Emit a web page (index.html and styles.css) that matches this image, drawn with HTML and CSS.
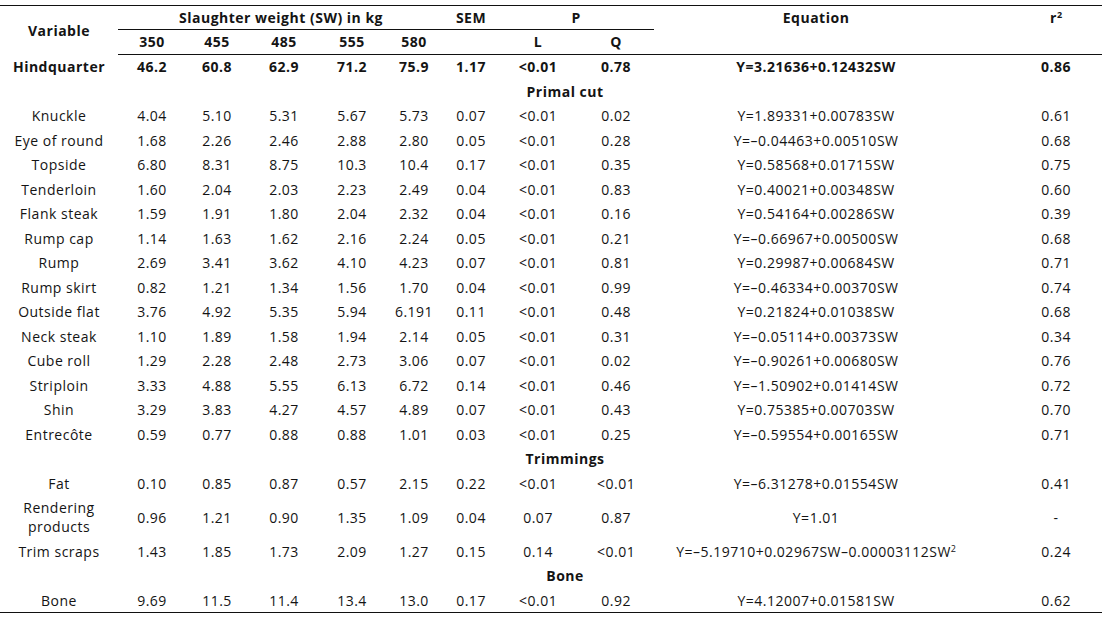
FILE: index.html
```html
<!DOCTYPE html>
<html lang="en">
<head>
<meta charset="utf-8">
<title>Hindquarter primal cuts by slaughter weight</title>
<link rel="stylesheet" href="styles.css">
</head>
<body>
<table class="data">
  <colgroup>
    <col class="c-var"><col class="c-350"><col class="c-455"><col class="c-485"><col class="c-555"><col class="c-580">
    <col class="c-sem"><col class="c-l"><col class="c-q"><col class="c-eq"><col class="c-r2">
  </colgroup>
  <thead>
    <tr class="h1">
      <th rowspan="2" class="var-head">Variable</th>
      <th colspan="5" class="rule">Slaughter weight (SW) in kg</th>
      <th class="rule">SEM</th>
      <th colspan="2" class="rule">P</th>
      <th>Equation</th>
      <th class="r2">r<sup class="sup">2</sup></th>
    </tr>
    <tr class="h2">
      <th class="rule">350</th>
      <th class="rule">455</th>
      <th class="rule">485</th>
      <th class="rule">555</th>
      <th class="rule">580</th>
      <th class="rule"></th>
      <th class="rule">L</th>
      <th class="rule">Q</th>
      <th class="rule"></th>
      <th class="rule r2"></th>
    </tr>
  </thead>
  <tbody>
    <tr class="bold"><td>Hindquarter</td><td>46.2</td><td>60.8</td><td>62.9</td><td>71.2</td><td>75.9</td><td>1.17</td><td>&lt;0.01</td><td>0.78</td><td>Y=3.21636+0.12432SW</td><td class="r2">0.86</td></tr>
    <tr class="section"><td colspan="11">Primal cut</td></tr>
    <tr><td>Knuckle</td><td>4.04</td><td>5.10</td><td>5.31</td><td>5.67</td><td>5.73</td><td>0.07</td><td>&lt;0.01</td><td>0.02</td><td>Y=1.89331+0.00783SW</td><td class="r2">0.61</td></tr>
    <tr><td>Eye of round</td><td>1.68</td><td>2.26</td><td>2.46</td><td>2.88</td><td>2.80</td><td>0.05</td><td>&lt;0.01</td><td>0.28</td><td>Y=–0.04463+0.00510SW</td><td class="r2">0.68</td></tr>
    <tr><td>Topside</td><td>6.80</td><td>8.31</td><td>8.75</td><td>10.3</td><td>10.4</td><td>0.17</td><td>&lt;0.01</td><td>0.35</td><td>Y=0.58568+0.01715SW</td><td class="r2">0.75</td></tr>
    <tr><td>Tenderloin</td><td>1.60</td><td>2.04</td><td>2.03</td><td>2.23</td><td>2.49</td><td>0.04</td><td>&lt;0.01</td><td>0.83</td><td>Y=0.40021+0.00348SW</td><td class="r2">0.60</td></tr>
    <tr><td>Flank steak</td><td>1.59</td><td>1.91</td><td>1.80</td><td>2.04</td><td>2.32</td><td>0.04</td><td>&lt;0.01</td><td>0.16</td><td>Y=0.54164+0.00286SW</td><td class="r2">0.39</td></tr>
    <tr><td>Rump cap</td><td>1.14</td><td>1.63</td><td>1.62</td><td>2.16</td><td>2.24</td><td>0.05</td><td>&lt;0.01</td><td>0.21</td><td>Y=–0.66967+0.00500SW</td><td class="r2">0.68</td></tr>
    <tr><td>Rump</td><td>2.69</td><td>3.41</td><td>3.62</td><td>4.10</td><td>4.23</td><td>0.07</td><td>&lt;0.01</td><td>0.81</td><td>Y=0.29987+0.00684SW</td><td class="r2">0.71</td></tr>
    <tr><td>Rump skirt</td><td>0.82</td><td>1.21</td><td>1.34</td><td>1.56</td><td>1.70</td><td>0.04</td><td>&lt;0.01</td><td>0.99</td><td>Y=–0.46334+0.00370SW</td><td class="r2">0.74</td></tr>
    <tr><td>Outside flat</td><td>3.76</td><td>4.92</td><td>5.35</td><td>5.94</td><td>6.191</td><td>0.11</td><td>&lt;0.01</td><td>0.48</td><td>Y=0.21824+0.01038SW</td><td class="r2">0.68</td></tr>
    <tr><td>Neck steak</td><td>1.10</td><td>1.89</td><td>1.58</td><td>1.94</td><td>2.14</td><td>0.05</td><td>&lt;0.01</td><td>0.31</td><td>Y=–0.05114+0.00373SW</td><td class="r2">0.34</td></tr>
    <tr><td>Cube roll</td><td>1.29</td><td>2.28</td><td>2.48</td><td>2.73</td><td>3.06</td><td>0.07</td><td>&lt;0.01</td><td>0.02</td><td>Y=–0.90261+0.00680SW</td><td class="r2">0.76</td></tr>
    <tr><td>Striploin</td><td>3.33</td><td>4.88</td><td>5.55</td><td>6.13</td><td>6.72</td><td>0.14</td><td>&lt;0.01</td><td>0.46</td><td>Y=–1.50902+0.01414SW</td><td class="r2">0.72</td></tr>
    <tr><td>Shin</td><td>3.29</td><td>3.83</td><td>4.27</td><td>4.57</td><td>4.89</td><td>0.07</td><td>&lt;0.01</td><td>0.43</td><td>Y=0.75385+0.00703SW</td><td class="r2">0.70</td></tr>
    <tr><td>Entrecôte</td><td>0.59</td><td>0.77</td><td>0.88</td><td>0.88</td><td>1.01</td><td>0.03</td><td>&lt;0.01</td><td>0.25</td><td>Y=–0.59554+0.00165SW</td><td class="r2">0.71</td></tr>
    <tr class="section"><td colspan="11">Trimmings</td></tr>
    <tr><td>Fat</td><td>0.10</td><td>0.85</td><td>0.87</td><td>0.57</td><td>2.15</td><td>0.22</td><td>&lt;0.01</td><td>&lt;0.01</td><td>Y=–6.31278+0.01554SW</td><td class="r2">0.41</td></tr>
    <tr><td>Rendering products</td><td>0.96</td><td>1.21</td><td>0.90</td><td>1.35</td><td>1.09</td><td>0.04</td><td>0.07</td><td>0.87</td><td>Y=1.01</td><td class="r2">-</td></tr>
    <tr><td>Trim scraps</td><td>1.43</td><td>1.85</td><td>1.73</td><td>2.09</td><td>1.27</td><td>0.15</td><td>0.14</td><td>&lt;0.01</td><td>Y=–5.19710+0.02967SW–0.00003112SW<sup class="sup">2</sup></td><td class="r2">0.24</td></tr>
    <tr class="section"><td colspan="11">Bone</td></tr>
    <tr class="last"><td>Bone</td><td>9.69</td><td>11.5</td><td>11.4</td><td>13.4</td><td>13.0</td><td>0.17</td><td>&lt;0.01</td><td>0.92</td><td>Y=4.12007+0.01581SW</td><td class="r2">0.62</td></tr>
  </tbody>
</table>
</body>
</html>
```

FILE: styles.css
```css
html, body {
  margin: 0;
  background: #ffffff;
}

body {
  padding-top: 5px;
  font-family: "Open Sans", "Noto Sans", "Liberation Sans", sans-serif;
  font-size: 14px;
  letter-spacing: 0.5px;
  color: #141414;
}

.data {
  width: 1102px;
  table-layout: fixed;
  border-collapse: separate;
  border-spacing: 0;
  border-top: 1px solid #111;
}

.c-var { width: 118px; }
.c-350 { width: 68px; }
.c-455 { width: 62px; }
.c-485 { width: 72px; }
.c-555 { width: 64px; }
.c-580 { width: 60px; }
.c-sem { width: 54px; }
.c-l { width: 80px; }
.c-q { width: 76px; }
.c-eq { width: 324px; }
.c-r2 { width: 124px; }

.data th,
.data td {
  text-align: center;
  line-height: 19px;
  padding: 0;
  white-space: normal;
}

.data th {
  font-weight: 700;
}

.h1 th {
  padding: 1.5px 0 2.5px;
  vertical-align: middle;
}

.h2 th {
  padding: 2px 0 3px;
}

.data th.rule {
  border-bottom: 1px solid #111;
}

.data th.var-head {
  vertical-align: middle;
}

.data td {
  padding: 2.25px 0 3.25px;
  vertical-align: middle;
}

.data .r2 {
  padding-left: 32px;
}

.bold td {
  font-weight: 700;
}

.section td {
  font-weight: 700;
  padding-left: 28px;
}

.last td {
  border-bottom: 1px solid #111;
  padding-bottom: 2.25px;
}

.sup {
  font-size: 9px;
  line-height: 0;
  vertical-align: 5px;
  letter-spacing: 0;
}
```
